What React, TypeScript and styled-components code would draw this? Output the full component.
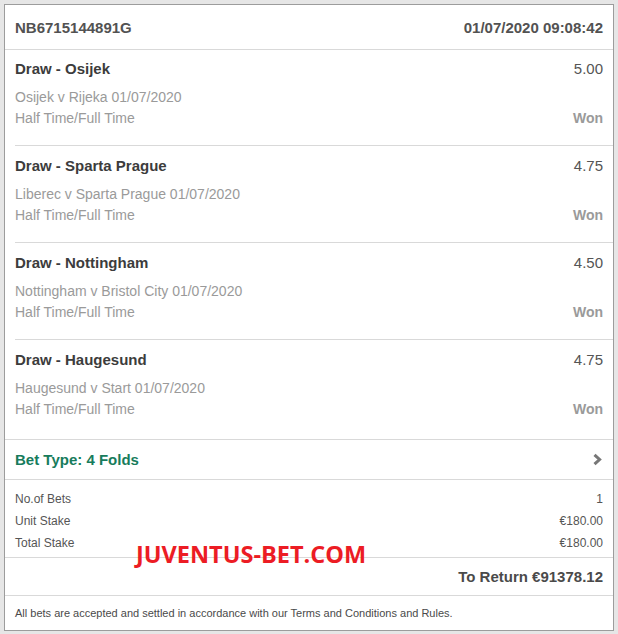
import React from "react";
import styled, { createGlobalStyle } from "styled-components";

const GlobalStyle = createGlobalStyle`
  html, body { margin: 0; padding: 0; background: #e6e6e6; }
  body { font-family: "Liberation Sans", Arial, sans-serif; }
  * { box-sizing: border-box; }
`;

const Page = styled.div`
  padding: 4px;
  width: 618px;
  height: 634px;
`;

const Card = styled.div`
  position: relative;
  width: 610px;
  height: 627px;
  background: #fff;
  border: 1px solid #9c9c9c;
  display: flex;
  flex-direction: column;
`;

const Header = styled.div`
  height: 45px;
  padding: 0 10px;
  display: flex;
  align-items: center;
  justify-content: space-between;
  border-bottom: 1px solid #d9d9d9;
  font-size: 15px;
  font-weight: 700;
  color: #525252;
`;

const Selections = styled.div`
  padding: 0 0 0 10px;
  border-bottom: 1px solid #d9d9d9;
`;

const Selection = styled.div<{ $first?: boolean; $last?: boolean }>`
  padding: ${(p) => (p.$first ? "9px" : "10px")} 10px 0 0;
  border-bottom: ${(p) => (p.$last ? "none" : "1px solid #d9d9d9")};
  height: ${(p) => (p.$last ? "99px" : p.$first ? "96px" : "97px")};
`;

const Row = styled.div`
  display: flex;
  justify-content: space-between;
  align-items: baseline;
`;

const Title = styled.div`
  font-size: 15px;
  line-height: 20px;
  font-weight: 700;
  color: #3c3c3c;
`;

const Odds = styled.div`
  font-size: 15px;
  line-height: 20px;
  color: #555;
`;

const Details = styled.div`
  margin-top: 8px;
`;

const Sub = styled.div`
  font-size: 14px;
  line-height: 21px;
  color: #9a9a9a;
`;

const Status = styled.div`
  font-size: 14px;
  line-height: 21px;
  font-weight: 700;
  color: #9a9a9a;
`;

const BetType = styled.div`
  height: 40px;
  padding: 0 10px 1px;
  display: flex;
  align-items: center;
  justify-content: space-between;
  border-bottom: 1px solid #d9d9d9;
  font-size: 15px;
  font-weight: 700;
  color: #177c5c;
`;

const Summary = styled.div`
  padding: 8px 10px 3px;
  border-bottom: 1px solid #d9d9d9;
`;

const SummaryRow = styled.div`
  display: flex;
  justify-content: space-between;
  font-size: 12px;
  line-height: 22px;
  color: #555;
`;

const Return = styled.div`
  height: 38px;
  padding: 0 10px;
  display: flex;
  align-items: center;
  justify-content: flex-end;
  border-bottom: 1px solid #d9d9d9;
  font-size: 15px;
  font-weight: 700;
  color: #4a4a4a;
`;

const Footer = styled.div`
  flex: 1;
  padding: 0 10px;
  display: flex;
  align-items: center;
  font-size: 11px;
  color: #4a4a4a;
`;

const Watermark = styled.div`
  position: absolute;
  left: 131px;
  top: 535px;
  font-family: "Open Sans", "Liberation Sans", sans-serif;
  font-weight: 700;
  font-size: 23.5px;
  line-height: 28px;
  color: #ec1c24;
`;

const Chevron = () => (
  <svg width="11" height="13" viewBox="0 0 11 13">
    <path d="M2.5 1.8 L7.6 6.5 L2.5 11.2" fill="none" stroke="#777" strokeWidth="3" />
  </svg>
);

const selections = [
  { title: "Draw - Osijek", odds: "5.00", match: "Osijek v Rijeka 01/07/2020" },
  { title: "Draw - Sparta Prague", odds: "4.75", match: "Liberec v Sparta Prague 01/07/2020" },
  { title: "Draw - Nottingham", odds: "4.50", match: "Nottingham v Bristol City 01/07/2020" },
  { title: "Draw - Haugesund", odds: "4.75", match: "Haugesund v Start 01/07/2020" },
];

export default function App() {
  return (
    <Page>
      <GlobalStyle />
      <Card>
        <Header>
          <span>NB6715144891G</span>
          <span>01/07/2020 09:08:42</span>
        </Header>
        <Selections>
          {selections.map((s, i) => (
            <Selection key={s.title} $first={i === 0} $last={i === selections.length - 1}>
              <Row>
                <Title>{s.title}</Title>
                <Odds>{s.odds}</Odds>
              </Row>
              <Details>
                <Sub>{s.match}</Sub>
                <Row>
                  <Sub>Half Time/Full Time</Sub>
                  <Status>Won</Status>
                </Row>
              </Details>
            </Selection>
          ))}
        </Selections>
        <BetType>
          <span>Bet Type: 4 Folds</span>
          <Chevron />
        </BetType>
        <Summary>
          <SummaryRow>
            <span>No.of Bets</span>
            <span>1</span>
          </SummaryRow>
          <SummaryRow>
            <span>Unit Stake</span>
            <span>€180.00</span>
          </SummaryRow>
          <SummaryRow>
            <span>Total Stake</span>
            <span>€180.00</span>
          </SummaryRow>
        </Summary>
        <Return>To Return €91378.12</Return>
        <Footer>All bets are accepted and settled in accordance with our Terms and Conditions and Rules.</Footer>
        <Watermark>JUVENTUS-BET.COM</Watermark>
      </Card>
    </Page>
  );
}
